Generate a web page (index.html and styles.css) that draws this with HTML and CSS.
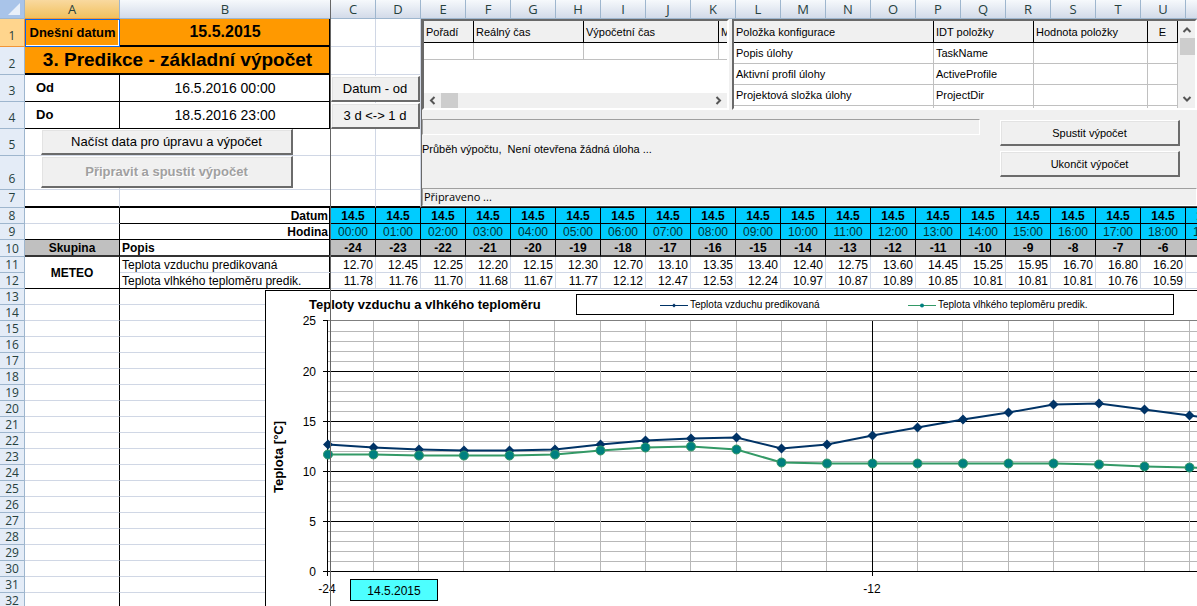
FILE: index.html
```html
<!DOCTYPE html>
<html lang="cs">
<head>
<meta charset="utf-8">
<title>3. Predikce - základní výpočet</title>
<link rel="stylesheet" href="styles.css">
</head>
<body>
<main class="workbook">
  <table class="sheet">
    <colgroup><col class="col-head"><col class="col-a"><col class="col-b"><col span="20" class="col-hour"></colgroup>
    <thead>
      <tr class="letters"><th class="corner"><svg width="12" height="12" viewBox="0 0 12 12"><path d="M12 0V12H0Z" fill="#e9f0fa"/></svg></th><th class="active">A</th><th class="freeze">B</th><th>C</th><th>D</th><th>E</th><th>F</th><th>G</th><th>H</th><th>I</th><th>J</th><th>K</th><th>L</th><th>M</th><th>N</th><th>O</th><th>P</th><th>Q</th><th>R</th><th>S</th><th>T</th><th>U</th><th>V</th></tr>
    </thead>
    <tbody>
      <tr class="h28"><th class="active">1</th><td class="orange today selected">Dnešní datum</td><td class="orange date edge">15.5.2015</td><td></td><td></td><td colspan="18"></td></tr>
      <tr class="h28"><th>2</th><td class="orange title edge" colspan="2">3. Predikce - základní výpočet</td><td></td><td></td><td colspan="18"></td></tr>
      <tr class="h27"><th>3</th><td class="range-name">Od</td><td class="range-value edge">16.5.2016 00:00</td><td></td><td></td><td colspan="18"></td></tr>
      <tr class="h27"><th>4</th><td class="range-name">Do</td><td class="range-value edge">18.5.2016 23:00</td><td></td><td></td><td colspan="18"></td></tr>
      <tr class="h27"><th>5</th><td></td><td class="freeze"></td><td></td><td></td><td colspan="18"></td></tr>
      <tr class="h34"><th>6</th><td></td><td class="freeze"></td><td></td><td></td><td colspan="18"></td></tr>
      <tr class="h18 thick"><th>7</th><td></td><td class="freeze"></td><td></td><td></td><td colspan="18"></td></tr>
      <tr class="h16 days"><th>8</th><td class="side"></td><td class="label edge">Datum</td><td>14.5</td><td>14.5</td><td>14.5</td><td>14.5</td><td>14.5</td><td>14.5</td><td>14.5</td><td>14.5</td><td>14.5</td><td>14.5</td><td>14.5</td><td>14.5</td><td>14.5</td><td>14.5</td><td>14.5</td><td>14.5</td><td>14.5</td><td>14.5</td><td>14.5</td><td>14.5</td></tr>
      <tr class="h16 hours"><th>9</th><td class="side last"></td><td class="label edge">Hodina</td><td>00:00</td><td>01:00</td><td>02:00</td><td>03:00</td><td>04:00</td><td>05:00</td><td>06:00</td><td>07:00</td><td>08:00</td><td>09:00</td><td>10:00</td><td>11:00</td><td>12:00</td><td>13:00</td><td>14:00</td><td>15:00</td><td>16:00</td><td>17:00</td><td>18:00</td><td>19:00</td></tr>
      <tr class="h17 offsets"><th>10</th><td class="group">Skupina</td><td class="caption edge">Popis</td><td>-24</td><td>-23</td><td>-22</td><td>-21</td><td>-20</td><td>-19</td><td>-18</td><td>-17</td><td>-16</td><td>-15</td><td>-14</td><td>-13</td><td>-12</td><td>-11</td><td>-10</td><td>-9</td><td>-8</td><td>-7</td><td>-6</td><td>-5</td></tr>
      <tr class="h16 values"><th>11</th><td class="meteo" rowspan="2">METEO</td><td class="name edge">Teplota vzduchu predikovaná</td><td>12.70</td><td>12.45</td><td>12.25</td><td>12.20</td><td>12.15</td><td>12.30</td><td>12.70</td><td>13.10</td><td>13.35</td><td>13.40</td><td>12.40</td><td>12.75</td><td>13.60</td><td>14.45</td><td>15.25</td><td>15.95</td><td>16.70</td><td>16.80</td><td>16.20</td><td>15.60</td></tr>
      <tr class="h16 values"><th>12</th><td class="name last edge">Teplota vlhkého teploměru predik.</td><td>11.78</td><td>11.76</td><td>11.70</td><td>11.68</td><td>11.67</td><td>11.77</td><td>12.12</td><td>12.47</td><td>12.53</td><td>12.24</td><td>10.97</td><td>10.87</td><td>10.89</td><td>10.85</td><td>10.81</td><td>10.81</td><td>10.81</td><td>10.76</td><td>10.59</td><td>10.45</td></tr>
      <tr class="h16"><th>13</th><td class="side"></td><td class="freeze"></td><td colspan="20"></td></tr>
      <tr class="h16"><th>14</th><td class="side"></td><td class="freeze"></td><td colspan="20"></td></tr>
      <tr class="h16"><th>15</th><td class="side"></td><td class="freeze"></td><td colspan="20"></td></tr>
      <tr class="h16"><th>16</th><td class="side"></td><td class="freeze"></td><td colspan="20"></td></tr>
      <tr class="h16"><th>17</th><td class="side"></td><td class="freeze"></td><td colspan="20"></td></tr>
      <tr class="h16"><th>18</th><td class="side"></td><td class="freeze"></td><td colspan="20"></td></tr>
      <tr class="h16"><th>19</th><td class="side"></td><td class="freeze"></td><td colspan="20"></td></tr>
      <tr class="h16"><th>20</th><td class="side"></td><td class="freeze"></td><td colspan="20"></td></tr>
      <tr class="h16"><th>21</th><td class="side"></td><td class="freeze"></td><td colspan="20"></td></tr>
      <tr class="h16"><th>22</th><td class="side"></td><td class="freeze"></td><td colspan="20"></td></tr>
      <tr class="h16"><th>23</th><td class="side"></td><td class="freeze"></td><td colspan="20"></td></tr>
      <tr class="h16"><th>24</th><td class="side"></td><td class="freeze"></td><td colspan="20"></td></tr>
      <tr class="h16"><th>25</th><td class="side"></td><td class="freeze"></td><td colspan="20"></td></tr>
      <tr class="h16"><th>26</th><td class="side"></td><td class="freeze"></td><td colspan="20"></td></tr>
      <tr class="h16"><th>27</th><td class="side"></td><td class="freeze"></td><td colspan="20"></td></tr>
      <tr class="h16"><th>28</th><td class="side"></td><td class="freeze"></td><td colspan="20"></td></tr>
      <tr class="h16"><th>29</th><td class="side"></td><td class="freeze"></td><td colspan="20"></td></tr>
      <tr class="h16"><th>30</th><td class="side"></td><td class="freeze"></td><td colspan="20"></td></tr>
      <tr class="h16"><th>31</th><td class="side"></td><td class="freeze"></td><td colspan="20"></td></tr>
      <tr class="h16"><th>32</th><td class="side"></td><td class="freeze"></td><td colspan="20"></td></tr>
    </tbody>
  </table>

  <div class="float-buttons range-buttons">
    <button class="push" type="button">Datum - od</button>
    <button class="push" type="button">3 d &lt;-&gt; 1 d</button>
  </div>
  <div class="float-buttons task-buttons">
    <button class="push" type="button">Načíst data pro úpravu a výpočet</button>
    <button class="push tall" type="button" disabled>Připravit a spustit výpočet</button>
  </div>

  <section class="panel">
    <div class="lists">
      <div class="listbox runs">
        <table class="list">
          <colgroup><col class="w50"><col class="w110"><col class="w135"><col></colgroup>
          <thead><tr><th>Pořadí</th><th>Reálný čas</th><th>Výpočetní čas</th><th>M</th></tr></thead>
          <tbody><tr class="short"><td></td><td></td><td></td><td></td></tr></tbody>
        </table>
        <div class="scroll-x">
          <svg width="17" height="15" viewBox="0 0 17 15"><path d="M10.5 4 7 7.500 10.500 11" class="arrow"/></svg>
          <span class="thumb-x"></span>
          <svg class="end" width="17" height="15" viewBox="0 0 17 15"><path d="M6.500 4 10 7.500 6.500 11" class="arrow"/></svg>
        </div>
      </div>
      <div class="listbox config">
        <table class="list">
          <colgroup><col class="w200"><col class="w100"><col><col class="w30"></colgroup>
          <thead><tr><th>Položka konfigurace</th><th>IDT položky</th><th>Hodnota položky</th><th class="mid">E</th></tr></thead>
          <tbody>
            <tr><td>Popis úlohy</td><td>TaskName</td><td></td><td></td></tr>
            <tr><td>Aktivní profil úlohy</td><td>ActiveProfile</td><td></td><td></td></tr>
            <tr><td>Projektová složka úlohy</td><td>ProjectDir</td><td></td><td></td></tr>
            <tr><td></td><td></td><td></td><td></td></tr>
          </tbody>
        </table>
        <div class="scroll-y">
          <svg width="16" height="17" viewBox="0 0 16 17"><path d="M4.500 11 8 7.500 11.500 11" class="arrow"/></svg>
          <span class="thumb-y"></span>
          <svg class="end" width="16" height="17" viewBox="0 0 16 17"><path d="M4.500 6 8 9.500 11.500 6" class="arrow"/></svg>
        </div>
      </div>
    </div>
    <div class="run">
      <div class="progress">
        <div class="bar"></div>
        <p class="state">Průběh výpočtu, &nbsp;Není otevřena žádná úloha ...</p>
      </div>
      <div class="actions">
        <button class="push small" type="button">Spustit výpočet</button>
        <button class="push small" type="button">Ukončit výpočet</button>
      </div>
    </div>
    <div class="status">Připraveno ...</div>
  </section>

  <section class="chart">
    <header class="chart-head">
      <h2>Teploty vzduchu a vlhkého teploměru</h2>
      <div class="legend">
        <span><svg width="28" height="8" viewBox="0 0 28 8"><path d="M0 4.500H28" stroke="#003366"/><path d="M14 2.500 16 4.500 14 6.500 12 4.500Z" fill="#003366"/></svg>Teplota vzduchu predikovaná</span>
        <span><svg width="28" height="8" viewBox="0 0 28 8"><path d="M0 4.500H28" stroke="#339966"/><circle cx="14" cy="4.500" r="2" fill="#008080"/></svg>Teplota vlhkého teploměru predik.</span>
      </div>
    </header>
    <svg class="plot" width="965" height="292" viewBox="266 315 965 292">
      <defs>
        <marker id="diamond" markerUnits="userSpaceOnUse" markerWidth="12" markerHeight="12" refX="6" refY="6"><path d="M6 1 11 6 6 11 1 6Z" fill="#003366"/></marker>
        <marker id="dot" markerUnits="userSpaceOnUse" markerWidth="12" markerHeight="12" refX="6" refY="6"><circle cx="6" cy="6" r="4.500" fill="#008080" stroke="#339966"/></marker>
      </defs>
      <path class="minor" d="M328 331.500H1231M328 341.500H1231M328 351.500H1231M328 361.500H1231M328 381.500H1231M328 391.500H1231M328 401.500H1231M328 411.500H1231M328 431.500H1231M328 441.500H1231M328 451.500H1231M328 461.500H1231M328 481.500H1231M328 491.500H1231M328 501.500H1231M328 511.500H1231M328 531.500H1231M328 541.500H1231M328 551.500H1231M328 561.500H1231"/>
      <path class="frame" d="M328 320.500H1231"/>
      <path class="major" d="M323 371.500H1231M323 421.500H1231M323 471.500H1231M323 521.500H1231M323 571.500H1231M323 320.500H328M327.500 320V576"/>
      <path class="minor" d="M373.500 321V571M418.500 321V571M463.500 321V571M509.500 321V571M554.500 321V571M600.500 321V571M645.500 321V571M690.500 321V571M736.500 321V571M781.500 321V571M826.500 321V571M917.500 321V571M962.500 321V571M1008.500 321V571M1053.500 321V571M1098.500 321V571M1144.500 321V571M1189.500 321V571"/>
      <path class="major" d="M872.500 321V576"/>
      <polyline class="air" points="328,444.500 373.500,447.500 419,449.500 464,450.500 509.500,450.500 555,449.500 600.500,444.500 645.500,440.500 691,438.500 736.500,437.500 781.500,448.500 827,444.500 872.500,435.500 917.500,427.500 963,419.500 1008.500,412.500 1053.500,404.500 1099,403.500 1144.500,409.500 1189.500,415.500 1235,421.500"/>
      <polyline class="wet" points="328,454.500 373.500,454.500 419,455.500 464,455.500 509.500,455.500 555,454.500 600.500,450.500 645.500,447.500 691,446.500 736.500,449.500 781.500,462.500 827,463.500 872.500,463.500 917.500,463.500 963,463.500 1008.500,463.500 1053.500,463.500 1099,464.500 1144.500,466.500 1189.500,467.500 1235,468.500"/>
      <g class="axis-y"><text x="316" y="325">25</text><text x="316" y="376">20</text><text x="316" y="426">15</text><text x="316" y="476">10</text><text x="316" y="526">5</text><text x="316" y="576">0</text></g>
      <g class="axis-x"><text x="327" y="593">-24</text><text x="872" y="593">-12</text></g>
      <rect x="350.500" y="579.500" width="87" height="21" fill="#4dffff" stroke="#000"/>
      <text class="day" x="394" y="595">14.5.2015</text>
      <text class="axis-name" transform="translate(283 457) rotate(-90)">Teplota [°C]</text>
    </svg>
  </section>
  <div class="freeze-line"></div>
</main>
</body>
</html>
```
FILE: styles.css
```css
* { box-sizing: border-box; }

body {
  margin: 0;
  background: #fff;
  color: #000;
  font: 12px/14px "Liberation Sans", Arial, sans-serif;
}

.workbook {
  position: relative;
  height: 100vh;
  overflow: hidden;
}

/* Sheet */
.sheet {
  width: 1231px;
  table-layout: fixed;
  border-collapse: separate;
  border-spacing: 0;
}
.col-head { width: 25px; }
.col-a { width: 95px; }
.col-b { width: 211px; }
.col-hour { width: 45px; }

.sheet th, .sheet td {
  padding: 0;
  border: solid #d0d7e5;
  border-width: 0 1px 1px 0;
  white-space: nowrap;
  overflow: hidden;
}
.sheet th {
  border-color: #9eb6ce;
  background: #e4ecf7;
  color: #27413e;
  font: 12px/14px "Open Sans", sans-serif;
  vertical-align: bottom;
}
.letters { height: 19px; }
.sheet .letters th {
  background: linear-gradient(#f6f9fc, #d3dbe9);
  font-size: 13px;
  line-height: 18px;
}
.sheet .letters .corner {
  background: #a9c4e9;
  line-height: 0;
  text-align: right;
  vertical-align: middle;
  padding-right: 4px;
}
.sheet .letters .active {
  background: linear-gradient(#f9d99f, #f1c15f);
  border-bottom-color: #f29536;
}
.sheet tbody .active {
  background: #ffd58d;
  border-color: #f29536;
}
.h28 { height: 28px; }
.h27 { height: 27px; }
.h34 { height: 34px; }
.h18 { height: 18px; }
.h17 { height: 17px; }
.h16 { height: 16px; }
.sheet .h28 th, .sheet .h27 th, .sheet .h34 th { padding-bottom: 3px; }
.sheet .h18 th { padding-bottom: 2px; }

.sheet .freeze { border-right-color: #666; }
.sheet .edge {
  border-right-color: #666;
  box-shadow: inset -1px 0 #000;
}
.sheet .orange {
  background: #ff9900;
  border-bottom: 2px solid #000;
  font-weight: bold;
  text-align: center;
}
.sheet .today {
  border-right-color: #000;
  font-size: 13px;
}
.sheet .selected {
  border: 1px solid #0a64e6;
  box-shadow: inset -1px -1px #fff;
}
.sheet .date { font-size: 16px; }
.sheet .title { font-size: 19px; line-height: 24px; }
.sheet .range-name {
  padding-left: 11px;
  border-color: #000;
  font-size: 13px;
  font-weight: bold;
}
.sheet .range-value {
  border-bottom-color: #000;
  font-size: 14px;
  text-align: center;
}
.sheet .thick td { border-bottom: 2px solid #000; }
.sheet .side { border-right-color: #000; }
.sheet .side.last { border-bottom-color: #000; }
.days td, .hours td, .offsets td { text-align: center; }
.sheet .days td:not(.side), .sheet .hours td:not(.side) {
  background: #00ccff;
  border-bottom-color: #000;
}
.sheet .days td:not(.edge), .sheet .hours td:not(.edge) { border-right-color: #000; }
.days td, .offsets td { font-weight: bold; }
.sheet .hours td { color: #003333; }
.sheet tr .label.label.label {
  background: #fff;
  color: #000;
  font-weight: bold;
  text-align: right;
  padding-right: 2px;
}
.sheet .offsets td {
  background: #c0c0c0;
  border-bottom: 2px solid #333;
}
.sheet .offsets td:not(.edge) { border-right-color: #000; }
.sheet .offsets .caption {
  background: #fff;
  text-align: left;
  padding-left: 2px;
}
.sheet .meteo {
  border-color: #000;
  font-weight: bold;
  text-align: center;
}
.sheet .values td { text-align: right; padding-right: 2px; }
.sheet .values .meteo { text-align: center; padding: 0; }
.sheet .values .name { text-align: left; padding-left: 2px; }
.sheet .name.last { border-bottom-color: #000; }

/* Controls floating over the cells */
.push {
  height: 26px;
  padding: 0;
  border: solid;
  border-width: 1px 2px 2px 1px;
  border-color: #fff #6b6b6b #6b6b6b #fff;
  background: #f0f0f0;
  box-shadow: inset 1px 1px #e3e3e3;
  color: #000;
  font: 13px/16px "Liberation Sans", Arial, sans-serif;
}
.push:disabled {
  color: #a0a0a0;
  font-weight: bold;
  text-shadow: 1px 1px #fff;
}
.push.tall { height: 32px; }
.push.small { font-size: 11px; }
.float-buttons {
  position: absolute;
  display: flex;
  flex-direction: column;
  gap: 1px;
}
.range-buttons { left: 331px; top: 76px; width: 89px; }
.task-buttons { left: 41px; top: 129px; width: 252px; }

/* Computation panel */
.panel {
  position: absolute;
  left: 421px;
  top: 19px;
  right: 0;
  height: 188px;
  display: flex;
  flex-direction: column;
  border-left: 1px solid #696969;
  border-bottom: 1px solid #444;
  background: #f0f0f0;
  font-size: 11px;
}
.lists {
  display: flex;
  gap: 3px;
  height: 91px;
}
.listbox {
  border: 2px solid;
  border-color: #696969 #fff #fff #696969;
  background: #fff;
  overflow: hidden;
}
.runs {
  width: 307px;
  display: flex;
  flex-direction: column;
  justify-content: space-between;
}
.config { flex: 1; display: flex; }
.list {
  width: 100%;
  table-layout: fixed;
  border-collapse: separate;
  border-spacing: 0;
}
.config .list { flex: 1; width: auto; height: 106px; }
.w30 { width: 30px; }
.w50 { width: 50px; }
.w100 { width: 100px; }
.w110 { width: 110px; }
.w135 { width: 135px; }
.w200 { width: 200px; }
.list th, .list td {
  height: 21px;
  padding: 0 2px;
  border: solid #c0c0c0;
  border-width: 0 1px 1px 0;
  text-align: left;
  font-weight: normal;
  white-space: nowrap;
  overflow: hidden;
}
.list th { height: 22px; background: #f0f0f0; border-color: #000; }
.list .mid { text-align: center; }
.list .short td { height: 17px; }
.runs th:last-child, .runs td:last-child { border-right: 0; }
.arrow { fill: none; stroke: #555; stroke-width: 2; }
.scroll-x, .scroll-y { display: flex; background: #f0f0f0; }
.scroll-x { height: 15px; }
.scroll-y { flex-direction: column; align-items: flex-end; width: 17px; }
.thumb-x { width: 17px; background: #cdcdcd; }
.thumb-y { width: 15px; height: 17px; background: #cdcdcd; }
.scroll-x .end { margin-left: auto; }
.scroll-y .end { margin-top: auto; }

.run {
  flex: 1;
  display: flex;
  justify-content: space-between;
  gap: 20px;
  padding: 9px 17px 0 0;
}
.progress { flex: 1; }
.bar {
  height: 16px;
  border: 1px solid;
  border-color: #a0a0a0 #fff #fff #a0a0a0;
}
.state { margin: 7px 0 0; }
.actions {
  display: flex;
  flex-direction: column;
  gap: 5px;
  width: 180px;
  padding-top: 1px;
}
.status {
  height: 18px;
  padding-left: 1px;
  border: 1px solid;
  border-color: #a0a0a0 #fff #fff #a0a0a0;
  font: 11px/16px "Open Sans", sans-serif;
}

/* Chart */
.chart {
  position: absolute;
  left: 265px;
  top: 290px;
  width: 966px;
  border: solid #000;
  border-width: 1px 0 0 1px;
  background: #fff;
}
.chart-head {
  display: flex;
  align-items: center;
  gap: 30px;
  height: 24px;
  padding: 3px 57px 0 43px;
}
.chart-head h2 {
  width: 237px;
  margin: 0;
  font-size: 13px;
  line-height: 20px;
  white-space: nowrap;
}
.legend {
  flex: 1;
  display: grid;
  grid-template-columns: 248px 1fr;
  align-items: center;
  height: 21px;
  padding-left: 83px;
  border: 1px solid #000;
  font-size: 10px;
  white-space: nowrap;
}
.legend span { display: flex; align-items: center; gap: 2px; }
.plot { display: block; }
.minor, .major, .frame { fill: none; }
.minor { stroke: #b8b8b8; }
.major { stroke: #000; }
.frame { stroke: #808080; }
.air, .wet { fill: none; stroke-width: 2; }
.air {
  stroke: #003366;
  marker-start: url(#diamond);
  marker-mid: url(#diamond);
}
.wet {
  stroke: #339966;
  marker-start: url(#dot);
  marker-mid: url(#dot);
}
.axis-y { text-anchor: end; }
.axis-x, .day, .axis-name { text-anchor: middle; }
.axis-name { font-size: 13px; font-weight: bold; }

.freeze-line {
  position: absolute;
  left: 330px;
  top: 0;
  bottom: 0;
  width: 1px;
  background: #666;
}
```
